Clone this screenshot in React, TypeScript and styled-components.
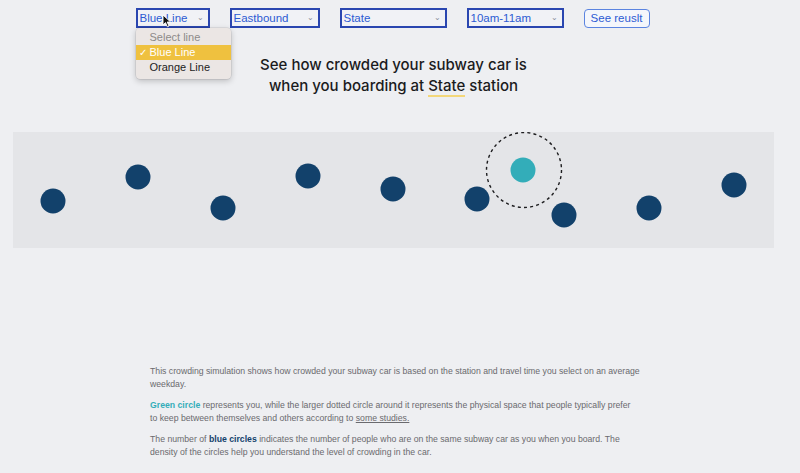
import * as React from 'react';
import styled, { createGlobalStyle } from 'styled-components';

const GlobalStyle = createGlobalStyle`
  html, body {
    margin: 0;
    padding: 0;
    background: #eeeff2;
  }
  body {
    font-family: "Liberation Sans", Arial, sans-serif;
  }
`;

const Page = styled.div`
  width: 787px;
  display: flex;
  flex-direction: column;
  align-items: center;
`;

const Controls = styled.div`
  display: flex;
  align-items: center;
  gap: 20px;
  margin-top: 8px;
  margin-left: -2px;
  height: 20px;
`;

const SelectWrap = styled.div`
  position: relative;
`;

const SelectBox = styled.div<{ $w: number }>`
  box-sizing: border-box;
  width: ${(p) => p.$w}px;
  height: 20px;
  border: 2px solid #2a46b0;
  background: #f1f2f6;
  display: flex;
  align-items: center;
  justify-content: space-between;
  padding: 0 4px 0 2px;
  font-size: 11.5px;
  color: #2d5bd3;
`;

const Chevron = styled.span`
  font-size: 8px;
  color: #8a8f9a;
  transform: translateY(-1px);
`;

const Menu = styled.div`
  position: absolute;
  top: 20px;
  left: 0;
  width: 95px;
  box-sizing: border-box;
  padding: 2px 0 4px;
  background: #ebe6e4;
  border-radius: 4px;
  box-shadow: 0 2px 6px rgba(0, 0, 0, 0.22), 0 0 0 0.5px rgba(0, 0, 0, 0.12);
  z-index: 5;
`;

const MenuItem = styled.div<{ $active?: boolean; $muted?: boolean }>`
  position: relative;
  height: 15px;
  line-height: 15px;
  padding-left: 14px;
  font-size: 11px;
  background: ${(p) => (p.$active ? '#efc13f' : 'transparent')};
  color: ${(p) => (p.$active ? '#fff' : p.$muted ? '#8d8a89' : '#1c1c1c')};
`;

const Check = styled.span`
  position: absolute;
  left: 3px;
  top: 0;
  font-size: 10px;
`;

const Cursor = styled.svg`
  position: absolute;
  left: 26px;
  top: 6px;
  z-index: 6;
`;

const ResultButton = styled.button`
  box-sizing: border-box;
  width: 66px;
  height: 19px;
  padding: 0;
  border: 1px solid #5b84e0;
  border-radius: 4px;
  background: #f4f6fb;
  color: #2d5bd3;
  font-family: "Liberation Sans", Arial, sans-serif;
  font-size: 11.5px;
`;

const Title = styled.h1`
  margin: 26px 0 0;
  font-family: Inter, "Liberation Sans", sans-serif;
  font-size: 15px;
  line-height: 21px;
  font-weight: 500;
  color: #1b1b1d;
  text-align: center;
`;

const Station = styled.span`
  border-bottom: 2px solid #f3d77a;
`;

const Canvas = styled.div`
  align-self: stretch;
  margin: 36px 13px 0;
  height: 116px;
  background: #e4e5e8;
`;

const Notes = styled.div`
  width: 493px;
  margin-top: 117px;
  display: flex;
  flex-direction: column;
  gap: 8px;
  margin-left: 6px;
`;

const Para = styled.p`
  margin: 0;
  font-size: 8.7px;
  line-height: 13px;
  color: #6a6a6e;
`;

const Strong = styled.b<{ $c: string }>`
  color: ${(p) => p.$c};
  font-weight: 700;
`;

const Link = styled.a`
  color: #6a6a6e;
  text-decoration: underline;
`;

const people = [
  [40, 69],
  [125, 45],
  [210, 76],
  [295, 44],
  [380, 57],
  [464, 67],
  [551, 83],
  [636, 76],
  [721, 53],
];

export default function App() {
  return (
    <>
      <GlobalStyle />
      <Page>
        <Controls>
          <SelectWrap>
            <SelectBox $w={74}>
              Blue Line <Chevron>⌄</Chevron>
            </SelectBox>
            <Cursor width="10" height="14" viewBox="0 0 10 14">
              <path d="M1 1 L1 11 L3.5 8.6 L5.4 12.8 L7 12 L5.2 8 L8.6 8 Z" fill="#111" stroke="#fff" strokeWidth="0.9" />
            </Cursor>
            <Menu>
              <MenuItem $muted>Select line</MenuItem>
              <MenuItem $active>
                <Check>✓</Check>Blue Line
              </MenuItem>
              <MenuItem>Orange Line</MenuItem>
            </Menu>
          </SelectWrap>
          <SelectBox $w={90}>
            Eastbound <Chevron>⌄</Chevron>
          </SelectBox>
          <SelectBox $w={107}>
            State <Chevron>⌄</Chevron>
          </SelectBox>
          <SelectBox $w={97}>
            10am-11am <Chevron>⌄</Chevron>
          </SelectBox>
          <ResultButton>See reuslt</ResultButton>
        </Controls>

        <Title>
          See how crowded your subway car is
          <br />
          when you boarding at <Station>State</Station> station
        </Title>

        <Canvas>
          <svg width="761" height="116" viewBox="0 0 761 116">
            {people.map(([x, y], i) => (
              <circle key={i} cx={x} cy={y} r={12.5} fill="#12416b" />
            ))}
            <circle cx={511} cy={38} r={37.5} fill="none" stroke="#1d1d1f" strokeWidth={1.4} strokeDasharray="3 3.2" />
            <circle cx={510} cy={38} r={12.5} fill="#33adb9" />
          </svg>
        </Canvas>

        <Notes>
          <Para>
            This crowding simulation shows how crowded your subway car is based on the station and travel time you select on an average weekday.
          </Para>
          <Para>
            <Strong $c="#33adb9">Green circle</Strong> represents you, while the larger dotted circle around it represents the physical space that people typically prefer to{'\u00a0'}keep between themselves and others according to <Link href="#">some studies.</Link>
          </Para>
          <Para>
            The number of <Strong $c="#12416b">blue circles</Strong> indicates the number of people who are on the same subway car as you when you board. The density of the circles help you understand the level of crowding in the car.
          </Para>
        </Notes>
      </Page>
    </>
  );
}
